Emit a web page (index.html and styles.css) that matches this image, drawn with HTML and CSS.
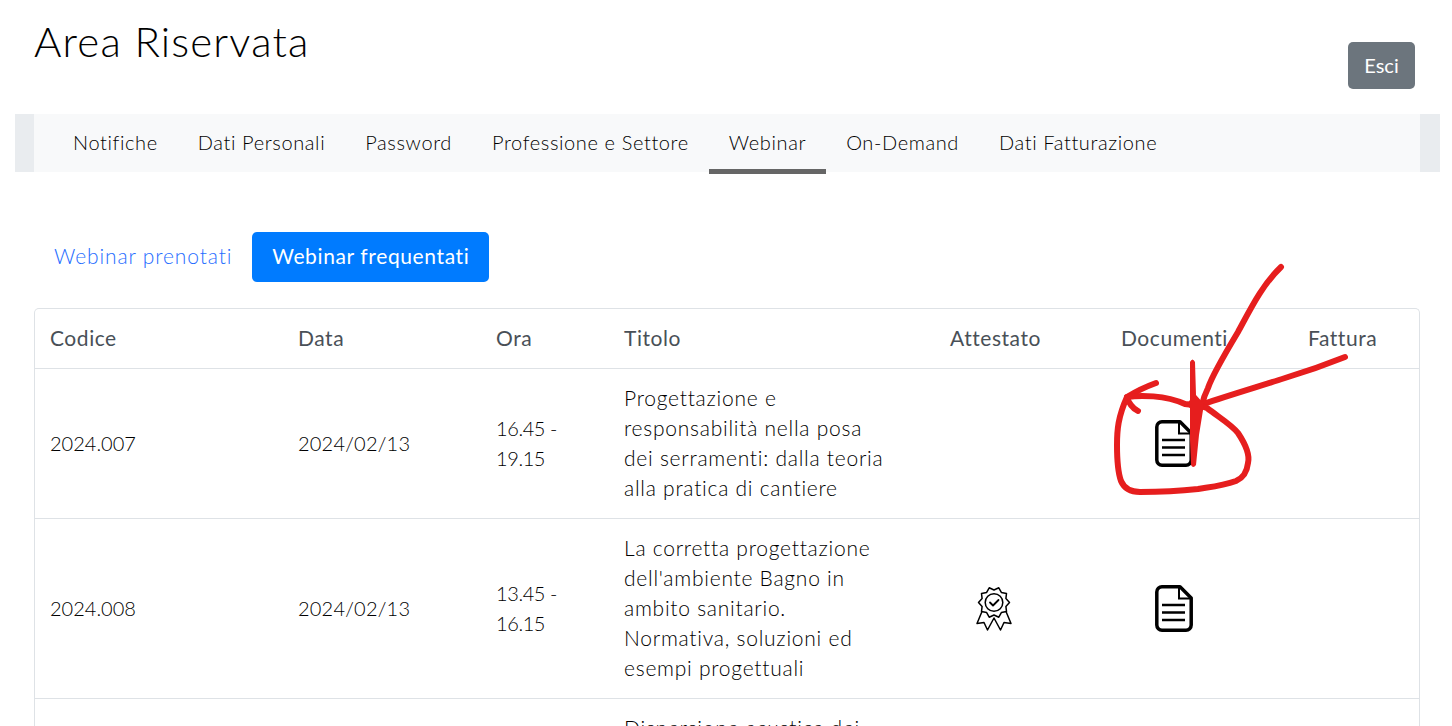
FILE: index.html
```html
<!DOCTYPE html>
<html lang="it">
<head>
<meta charset="utf-8">
<title>Area Riservata</title>
<link rel="stylesheet" href="styles.css">
</head>
<body>
<header class="top">
  <h1 class="title">Area Riservata</h1>
  <a class="btn-exit" href="#">Esci</a>
</header>
<nav class="tabs-wrap">
  <ul class="tabs">
    <li><a href="#">Notifiche</a></li>
    <li><a href="#">Dati Personali</a></li>
    <li><a href="#">Password</a></li>
    <li><a href="#">Professione e Settore</a></li>
    <li><a class="active" href="#">Webinar</a></li>
    <li><a href="#">On-Demand</a></li>
    <li><a href="#">Dati Fatturazione</a></li>
  </ul>
</nav>
<main class="content">
  <div class="pills">
    <a class="pill" href="#">Webinar prenotati</a>
    <a class="pill pill-active" href="#">Webinar frequentati</a>
  </div>
  <div class="table-box">
    <table class="grid">
      <colgroup>
        <col class="c1"><col class="c2"><col class="c3"><col class="c4"><col class="c5"><col class="c6"><col class="c7">
      </colgroup>
      <thead>
        <tr><th>Codice</th><th>Data</th><th>Ora</th><th>Titolo</th><th>Attestato</th><th>Documenti</th><th>Fattura</th></tr>
      </thead>
      <tbody>
        <tr>
          <td>2024.007</td><td class="date">2024/02/13</td><td class="time">16.45 - 19.15</td>
          <td class="txt">Progettazione e<br>responsabilità nella posa<br>dei serramenti: dalla teoria<br>alla pratica di cantiere</td>
          <td></td>
          <td><svg class="ico ico-doc" viewBox="0 0 38 47"><use href="#doc"/></svg></td>
          <td></td>
        </tr>
        <tr>
          <td>2024.008</td><td class="date">2024/02/13</td><td class="time">13.45 - 16.15</td>
          <td class="txt">La corretta progettazione<br>dell'ambiente Bagno in<br>ambito sanitario.<br>Normativa, soluzioni ed<br>esempi progettuali</td>
          <td><svg class="ico ico-award" viewBox="0 0 36 45"><use href="#award"/></svg></td>
          <td><svg class="ico ico-doc" viewBox="0 0 38 47"><use href="#doc"/></svg></td>
          <td></td>
        </tr>
        <tr class="row-cut">
          <td></td><td></td><td></td>
          <td class="txt">Dispersione acustica dei</td>
          <td></td><td></td><td></td>
        </tr>
      </tbody>
    </table>
  </div>
</main>
<svg class="defs" aria-hidden="true">
  <symbol id="doc" viewBox="0 0 38 47">
    <path d="M7 1.8H25L36.2 13V40A5.2 5.2 0 0 1 31 45.2H7A5.2 5.2 0 0 1 1.8 40V7A5.2 5.2 0 0 1 7 1.8Z" fill="none" stroke="#000" stroke-width="3.5" stroke-linejoin="round"/>
    <path d="M24 2.5V13.5H35.5" fill="none" stroke="#000" stroke-width="2"/>
    <path d="M7 20H30M7 27.5H30M7 35H30" stroke="#000" stroke-width="2.6"/>
  </symbol>
  <symbol id="award" viewBox="0 0 36 45">
    <path d="M18 4L22.8 1.8L25.35 6.4L30.5 7.4L29.9 12.6L33.5 16.5L29.9 20.4L30.5 25.6L25.35 26.6L22.8 31.2L18 29L13.2 31.2L10.65 26.6L5.5 25.6L6.1 20.4L2.5 16.5L6.1 12.6L5.5 7.4L10.65 6.4L13.2 1.8Z" fill="none" stroke="#000" stroke-width="1.5" stroke-linejoin="round"/>
    <circle cx="18" cy="16.5" r="8.8" fill="none" stroke="#000" stroke-width="1.5"/>
    <path d="M14 16.5L17 19.5L22.5 14" fill="none" stroke="#000" stroke-width="1.8" stroke-linecap="round" stroke-linejoin="round"/>
    <path d="M6 25.5L1 37.5L8 36.5L11.5 44L18 32L24.5 44L28 36.5L35 37.5L30 25.5" fill="none" stroke="#000" stroke-width="1.5" stroke-linejoin="round"/>
  </symbol>
</svg>
<svg class="scribble" viewBox="0 0 1452 726" aria-hidden="true">
  <g fill="none" stroke="#e61e1e" stroke-linecap="round" stroke-linejoin="round" stroke-width="6">
    <path d="M1281 267C1262 285 1250 310 1238 332C1226 352 1212 376 1208 388C1205 394 1203 400 1202 405"/>
    <path d="M1345 357C1325 365 1305 372 1285 378C1260 386 1230 395 1203 404"/>
    <path d="M1156 383C1145 387 1135 392 1127 397C1128 402 1133 409 1138 411"/>
    <path d="M1127 397C1140 395 1165 395 1185 404C1195 405 1200 405 1207 408C1220 418 1232 425 1238 433C1246 445 1250 455 1248 463C1247 472 1243 478 1236 481C1222 486 1210 487 1198 489C1180 491 1160 492 1140 492C1130 492 1124 488 1121 481C1117 470 1117 455 1117 445C1117 430 1118 417 1127 397"/>
    <path fill="#e61e1e" stroke="none" d="M1190 362Q1192.5 357 1195 362L1196 395L1204 404L1199 435L1196 465Q1193 469 1191 465L1190 440L1190 408L1186 405L1190 400Z"/>
  </g>
</svg>
</body>
</html>
```
FILE: styles.css
```css
* { box-sizing: border-box; }
html, body { margin: 0; padding: 0; }
body {
  width: 1452px;
  height: 726px;
  overflow: hidden;
  position: relative;
  background: #fff;
  color: #212529;
  font-family: "Lato", "Liberation Sans", sans-serif;
  font-size: 20px;
  line-height: 30px;
}
.top {
  height: 114px;
  padding: 12px 37px 0 34px;
  display: flex;
  justify-content: space-between;
  align-items: flex-start;
}
.title {
  margin: 0;
  font-size: 42px;
  line-height: 58px;
  font-weight: 300;
  letter-spacing: 1.15px;
  color: #000;
}
.btn-exit {
  margin-top: 30px;
  width: 67px;
  height: 47px;
  background: #6c757d;
  color: #fff;
  border-radius: 5px;
  text-align: center;
  line-height: 46px;
  text-decoration: none;
}
.tabs-wrap {
  margin-left: 15px;
  width: 1425px;
  height: 58px;
  padding: 0 20px 0 19px;
  background: #e9ecef;
}
.tabs {
  list-style: none;
  margin: 0;
  padding: 0 0 0 19px;
  height: 58px;
  background: #f8f9fa;
  display: flex;
}
.tabs a {
  display: block;
  height: 60px;
  padding: 13px 20px 0;
  color: #000;
  font-weight: 300;
  text-decoration: none;
  letter-spacing: .62px;
}
.tabs a.active { border-bottom: 5px solid #666; }
.content { padding: 60px 32px 0 34px; }
.pills { display: flex; height: 50px; margin-bottom: 26px; }
.pill {
  padding: 9px 20px;
  height: 50px;
  font-size: 21px;
  font-weight: 300;
  letter-spacing: .87px;
  color: #1f6dff;
  text-decoration: none;
  border-radius: 5px;
}
.pill-active { background: #007bff; color: #fff; font-weight: 400; letter-spacing: .62px; }
.table-box {
  border: 1px solid #dee2e6;
  border-bottom: 0;
  border-radius: 5px 5px 0 0;
}
.grid {
  width: 100%;
  table-layout: fixed;
  border-collapse: collapse;
}
.c1 { width: 248px; }
.c2 { width: 198px; }
.c3 { width: 128px; }
.c4 { width: 326px; }
.c5 { width: 171px; }
.c6 { width: 187px; }
.grid th, .grid td {
  padding: 13.5px 15px 15.5px;
  text-align: left;
  vertical-align: middle;
}
.grid th {
  padding: 14px 15px 15px;
  font-weight: 400;
  font-size: 21px;
  letter-spacing: .55px;
  color: #495057;
}
.grid td { border-top: 1px solid #dee2e6; font-weight: 300; color: #000; }
.grid td.txt {
  font-size: 21px;
  letter-spacing: .75px;
}
.grid td.date { letter-spacing: .2px; }
.grid td.time { letter-spacing: -.4px; padding-right: 30px; }
.ico { display: block; }
.ico-doc { width: 38px; height: 47px; margin-left: 34px; margin-top: 1px; margin-bottom: -1px; }
.ico-award { width: 36px; height: 45px; margin-left: 26px; margin-top: 1px; margin-bottom: -1px; }
.row-cut td { height: 180px; }
.row-cut td.txt { vertical-align: top; }
.defs { position: absolute; width: 0; height: 0; }
.scribble {
  position: absolute;
  left: 0;
  top: 0;
  width: 1452px;
  height: 726px;
  pointer-events: none;
}
```
